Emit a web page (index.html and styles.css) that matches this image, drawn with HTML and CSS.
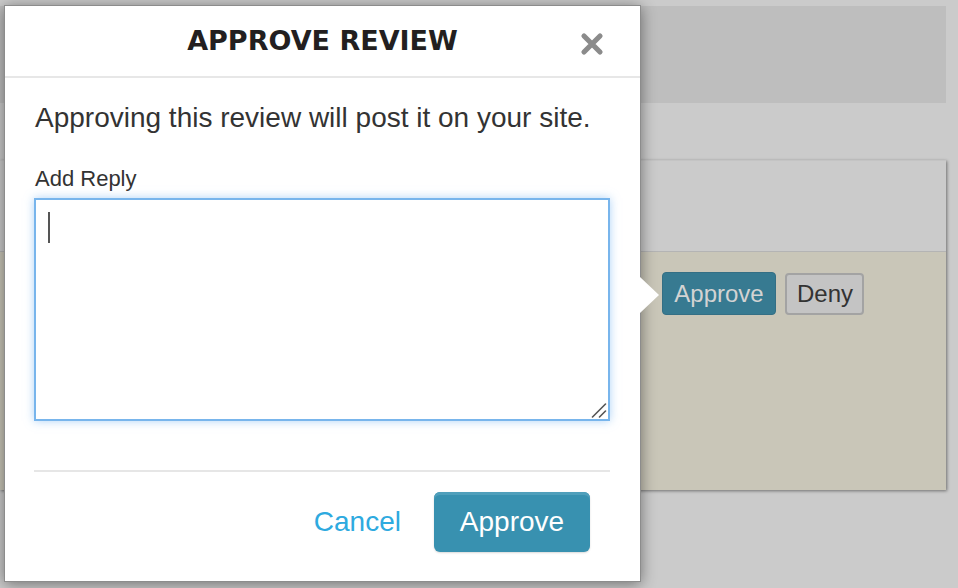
FILE: index.html
```html
<!DOCTYPE html>
<html lang="en">
<head>
<meta charset="utf-8">
<title>Approve Review</title>
<link rel="stylesheet" href="styles.css">
</head>
<body>
<div class="page">
  <div class="topbar"></div>
  <section class="card">
    <div class="card-head"></div>
    <div class="card-body">
      <button class="btn-sm btn-sm-approve" type="button">Approve</button>
      <button class="btn-sm btn-sm-deny" type="button">Deny</button>
    </div>
  </section>
</div>

<div class="modal" role="dialog" aria-labelledby="modal-title">
  <header class="modal-head">
    <span class="head-spacer"></span>
    <h2 id="modal-title" class="modal-title">APPROVE REVIEW</h2>
    <button class="close" type="button" aria-label="Close">
      <svg width="24" height="24" viewBox="0 0 24 24" aria-hidden="true">
        <path d="M4 4 L20 20 M20 4 L4 20" stroke="#8b8b8b" stroke-width="5.2" stroke-linecap="round" fill="none"/>
      </svg>
    </button>
  </header>
  <div class="modal-body">
    <p class="lead">Approving this review will post it on your site.</p>
    <label class="label" for="reply">Add Reply</label>
    <div class="field">
      <textarea id="reply" class="reply"></textarea>
      <span class="caret"></span>
      <svg class="grip" width="16" height="16" viewBox="0 0 16 16" aria-hidden="true">
        <path d="M1.5 15 L14.5 2 M8.5 15 L14.5 9" stroke="#555" stroke-width="1.6" stroke-linecap="round" fill="none"/>
      </svg>
    </div>
    <hr class="divider">
    <div class="actions">
      <a class="cancel" href="#">Cancel</a>
      <button class="btn-approve" type="button">Approve</button>
    </div>
  </div>
</div>
</body>
</html>
```
FILE: styles.css
```css
* { box-sizing: border-box; }

html, body {
  margin: 0;
  padding: 0;
}

body {
  width: 958px;
  height: 588px;
  overflow: hidden;
  background: #cbcbcb;
  font-family: "Liberation Sans", Arial, Helvetica, sans-serif;
  color: #333;
  position: relative;
}

.page {
  padding: 6px 12px 0 0;
}

.topbar {
  height: 97px;
  background: #bebebe;
}

.card {
  margin-top: 57px;
  height: 330px;
  display: flex;
  flex-direction: column;
  box-shadow: 1px 1px 3px rgba(0, 0, 0, 0.45);
  border-top: 1px solid #c4c4c4;
}

.card-head {
  height: 91px;
  background: #cbcbcb;
  border-bottom: 1px solid #b4b4b4;
}

.card-body {
  flex: 1;
  background: #c9c6b8;
  display: flex;
  align-items: flex-start;
  gap: 9px;
  padding: 20px 0 0 662px;
}

.btn-sm {
  font-family: "Liberation Sans", Arial, sans-serif;
  font-size: 24px;
  height: 43px;
  border-radius: 4px;
  padding: 0 10px;
  margin: 0;
  line-height: 1;
}

.btn-sm-approve {
  width: 114px;
  background: #377a91;
  border: 1px solid #346f85;
  color: #d3d3d3;
}

.btn-sm-deny {
  width: 79px;
  background: #c4c4c4;
  border: 2px solid #a3a3a3;
  color: #333;
  height: 42px;
  margin-top: 1px;
}

/* modal dialog over the page */
.modal {
  position: absolute;
  left: 4px;
  top: 5px;
  width: 637px;
  background: #fff;
  border: 1px solid #8c8c8c;
  box-shadow: 0 2px 14px rgba(0, 0, 0, 0.45);
}

.modal::after {
  content: "";
  position: absolute;
  right: -19px;
  top: 271px;
  width: 0;
  height: 0;
  border-left: 19px solid #fff;
  border-top: 18px solid transparent;
  border-bottom: 18px solid transparent;
}

.modal-head {
  height: 72px;
  border-bottom: 2px solid #e7e7e7;
  display: grid;
  grid-template-columns: 1fr auto 1fr;
  align-items: center;
}

.modal-title {
  margin: 0;
  font-family: "DejaVu Sans", sans-serif;
  font-weight: bold;
  font-size: 27px;
  line-height: 70px;
  color: #231f20;
  letter-spacing: 0;
}

.close {
  justify-self: end;
  margin: 0 36px 0 0;
  padding: 0;
  border: 0;
  background: none;
  width: 24px;
  height: 24px;
  display: flex;
  position: relative;
  top: 3px;
}

.modal-body {
  padding: 24px 30px 29px 29px;
}

.lead {
  margin: 0;
  font-size: 28px;
  line-height: 32px;
  color: #333;
  padding-left: 1px;
}

.label {
  display: block;
  margin-top: 32px;
  font-size: 22px;
  line-height: 26px;
  color: #333;
  padding-left: 1px;
}

.field {
  margin-top: 6px;
  position: relative;
}

.reply {
  display: block;
  width: 576px;
  height: 223px;
  margin: 0;
  border: 2px solid #78b5ec;
  border-radius: 0;
  box-shadow: 0 0 9px rgba(110, 175, 240, 0.55);
  outline: none;
  resize: none;
  font-family: "Liberation Sans", Arial, sans-serif;
  font-size: 22px;
  caret-color: transparent;
  background: #fff;
}

.caret {
  position: absolute;
  left: 14px;
  top: 14px;
  width: 2px;
  height: 31px;
  background: #555;
}

.grip {
  position: absolute;
  right: 3px;
  bottom: 3px;
}

.divider {
  margin: 49px 0 0;
  border: 0;
  height: 2px;
  background: #e6e6e6;
}

.actions {
  margin-top: 20px;
  display: flex;
  justify-content: flex-end;
  align-items: center;
  gap: 33px;
  padding-right: 20px;
}

.cancel {
  font-size: 28px;
  color: #2eaadf;
  text-decoration: none;
}

.btn-approve {
  width: 156px;
  height: 60px;
  margin: 0;
  padding: 0;
  border: 0;
  border-radius: 6px;
  background: #3891b0;
  box-shadow: inset 0 3px 0 #4f9fbb, 0 1px 2px rgba(0, 0, 0, 0.15);
  color: #fff;
  font-family: "Liberation Sans", Arial, sans-serif;
  font-size: 28px;
}
```
